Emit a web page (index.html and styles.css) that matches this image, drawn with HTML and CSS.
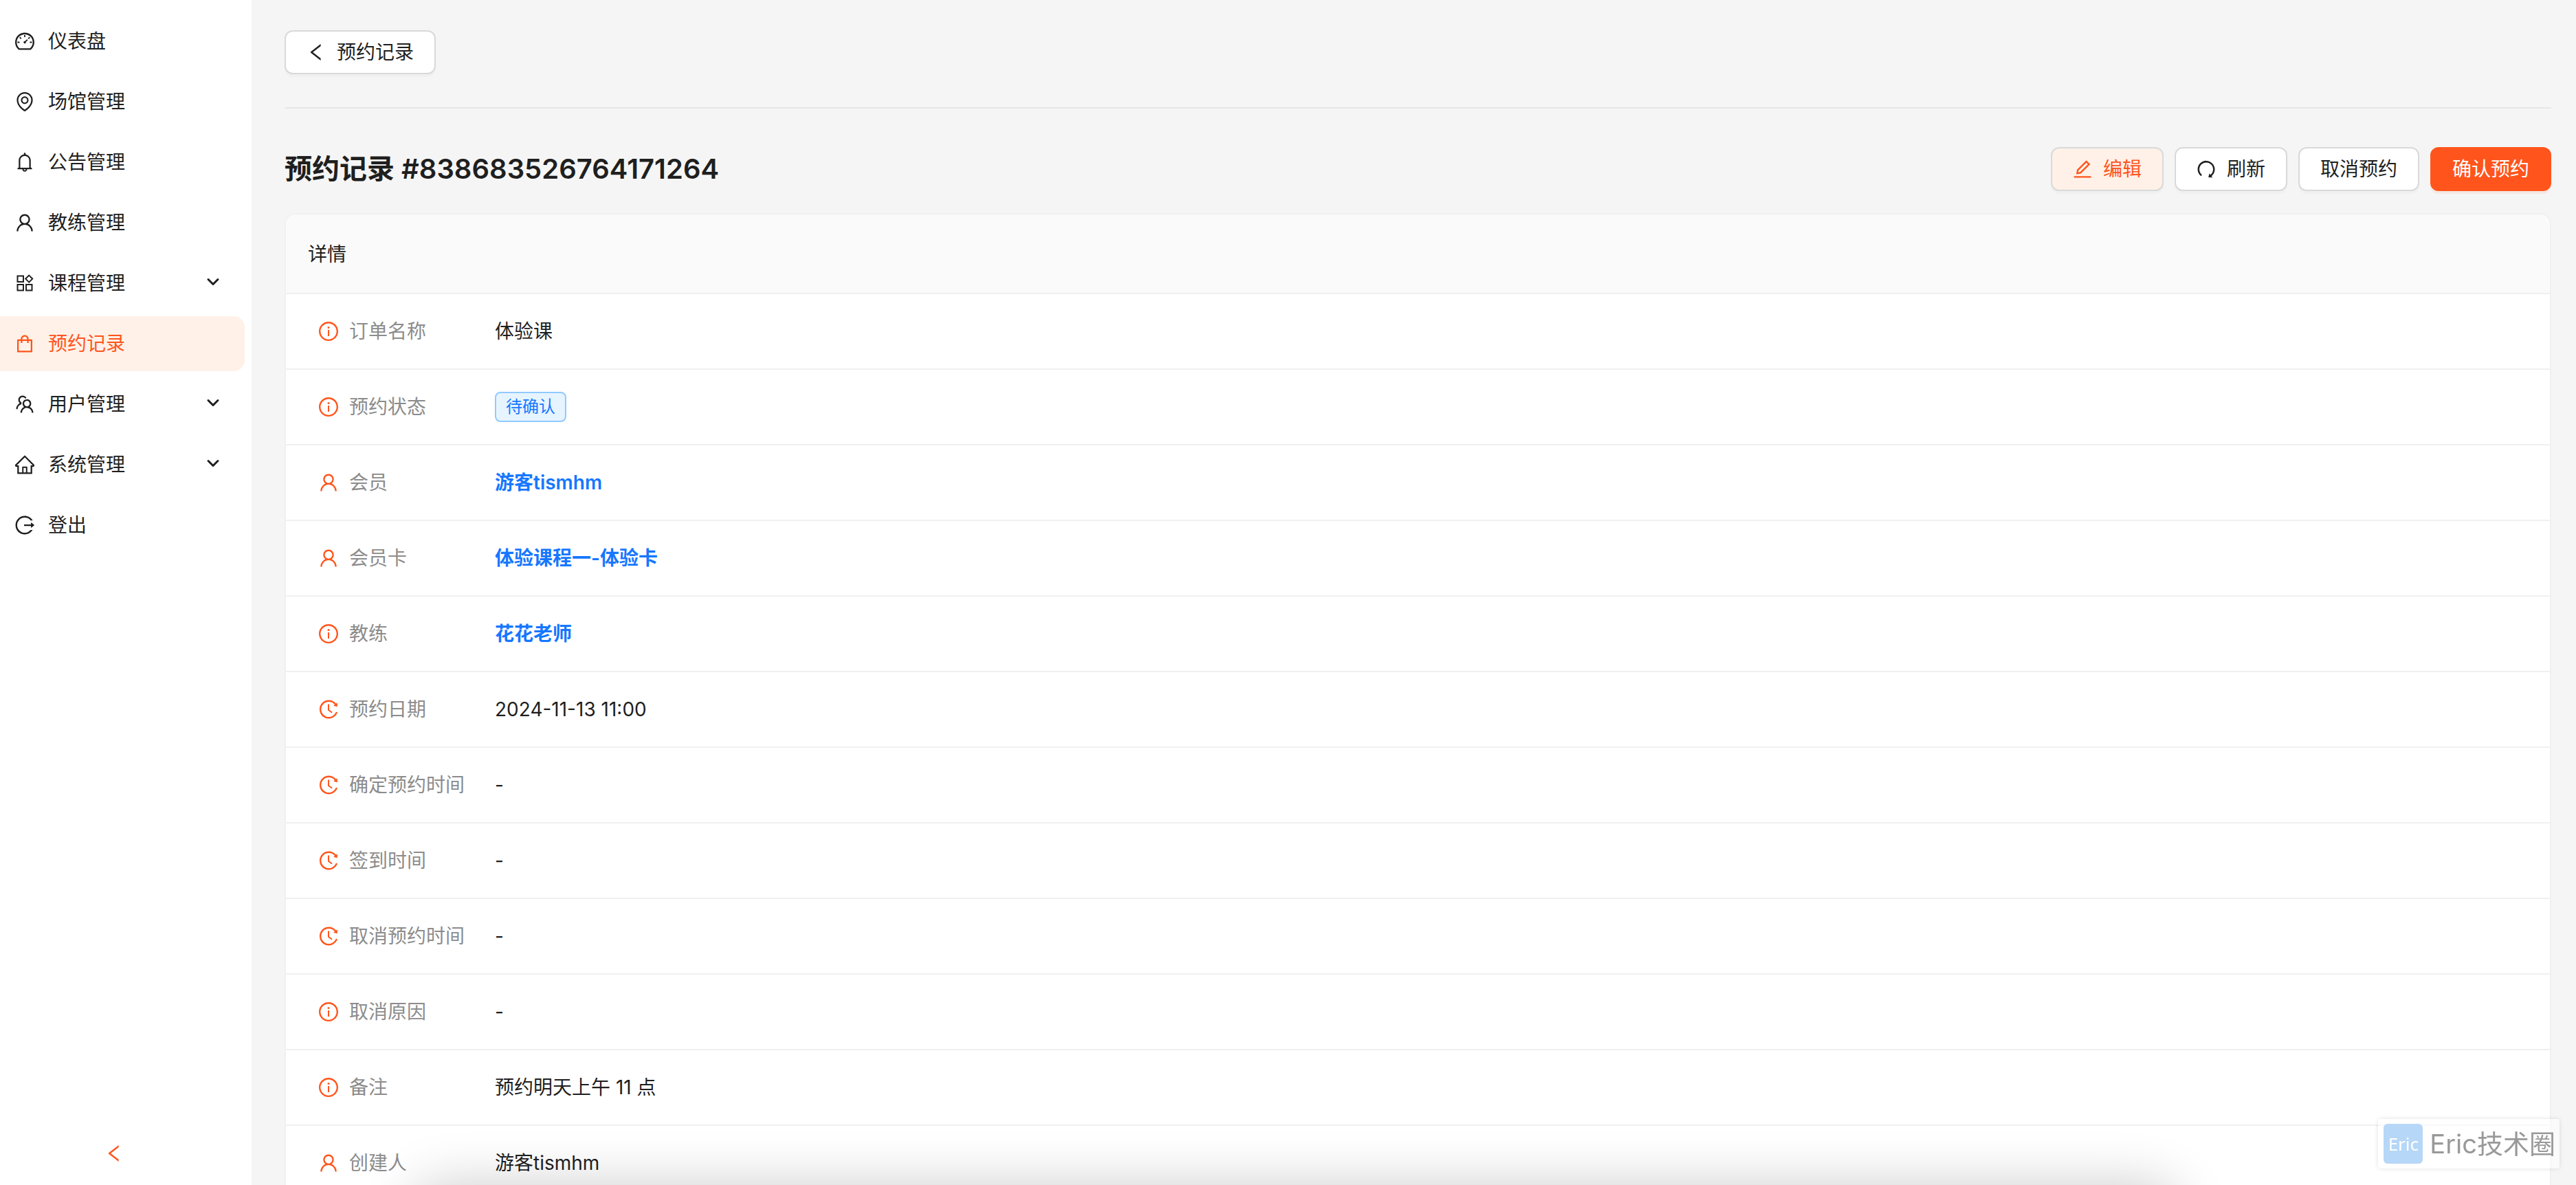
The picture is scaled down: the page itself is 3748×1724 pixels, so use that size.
FILE: index.html
```html
<!DOCTYPE html>
<html lang="zh-CN">
<head>
  <meta charset="UTF-8" />
  <meta name="viewport" content="width=device-width, initial-scale=1" />
  <title>预约记录</title>
  <link rel="stylesheet" href="styles.css">
</head>
<body>
  <!-- icon sprite -->
  <svg class="sprite" aria-hidden="true">
    <symbol id="i-dashboard" viewBox="64 64 896 896"><path d="M924.8 385.6a446.7 446.7 0 00-96-142.4 446.7 446.7 0 00-142.4-96C631.1 123.8 572.5 112 512 112s-119.1 11.8-174.4 35.2a446.7 446.7 0 00-142.4 96 446.7 446.7 0 00-96 142.4C75.8 440.9 64 499.5 64 560c0 132.7 58.3 257.7 159.9 343.1l1.7 1.4c5.8 4.8 13.1 7.5 20.6 7.5h531.7c7.5 0 14.8-2.7 20.6-7.5l1.7-1.4C901.7 817.7 960 692.7 960 560c0-60.5-11.9-119.1-35.2-174.4zM761.4 836H262.6A371.12 371.12 0 01140 560c0-99.4 38.7-192.8 109-263 70.3-70.3 163.7-109 263-109 99.4 0 192.8 38.7 263 109 70.3 70.3 109 163.7 109 263 0 105.6-44.5 205.5-122.6 276zM623.5 421.5a8.03 8.03 0 00-11.3 0L527.7 506c-18.7-5-39.4-.2-54.1 14.5a55.95 55.95 0 000 79.2 55.95 55.95 0 0079.2 0 55.87 55.87 0 0014.5-54.1l84.5-84.5c3.1-3.1 3.1-8.2 0-11.3l-28.3-28.3zM490 320h44c4.4 0 8-3.6 8-8v-80c0-4.4-3.6-8-8-8h-44c-4.4 0-8 3.6-8 8v80c0 4.4 3.6 8 8 8zm260 218v44c0 4.4 3.6 8 8 8h80c4.4 0 8-3.6 8-8v-44c0-4.4-3.6-8-8-8h-80c-4.4 0-8 3.6-8 8zm12.7-197.2l-31.1-31.1a8.03 8.03 0 00-11.3 0l-56.6 56.6a8.03 8.03 0 000 11.3l31.1 31.1c3.1 3.1 8.2 3.1 11.3 0l56.6-56.6c3.1-3.1 3.1-8.2 0-11.3zm-458.6-31.1a8.03 8.03 0 00-11.3 0l-31.1 31.1a8.03 8.03 0 000 11.3l56.6 56.6c3.1 3.1 8.2 3.1 11.3 0l31.1-31.1c3.1-3.1 3.1-8.2 0-11.3l-56.6-56.6zM262 530h-80c-4.4 0-8 3.6-8 8v44c0 4.4 3.6 8 8 8h80c4.4 0 8-3.6 8-8v-44c0-4.4-3.6-8-8-8z"/></symbol>
    <symbol id="i-pin" viewBox="64 64 896 896"><path d="M854.6 289.1a362.49 362.49 0 00-79.9-115.7 370.83 370.83 0 00-118.2-77.8C610.7 76.6 562.1 67 512 67c-50.1 0-98.7 9.6-144.5 28.5-44.3 18.3-84 44.5-118.2 77.8A363.6 363.6 0 00169.4 289c-19.5 45-29.4 92.8-29.4 142 0 70.6 16.9 140.9 50.1 208.7 26.7 54.5 64 107.6 111 158.1 80.3 86.2 164.5 138.9 188.4 153a43.9 43.9 0 0022.4 6.1c7.8 0 15.5-2 22.4-6.1 23.9-14.1 108.1-66.8 188.4-153 47-50.4 84.3-103.6 111-158.1C867.1 572 884 501.8 884 431.1c0-49.2-9.9-97-29.4-142zM512 880.2c-65.9-41.9-300-207.8-300-449.1 0-77.9 31.1-151.1 87.6-206.3C356.3 169.5 431.7 139 512 139s155.7 30.5 212.4 85.9C780.9 280 812 353.2 812 431.1c0 241.3-234.1 407.2-300 449.1zm0-617.2c-97.2 0-176 78.8-176 176s78.8 176 176 176 176-78.8 176-176-78.8-176-176-176zm79.2 255.2A111.6 111.6 0 01512 551c-29.9 0-58-11.7-79.2-32.8A111.6 111.6 0 01400 439c0-29.9 11.7-58 32.8-79.2A111.6 111.6 0 01512 327c29.9 0 58 11.6 79.2 32.8A111.6 111.6 0 01624 439c0 29.9-11.7 58-32.8 79.2z"/></symbol>
    <symbol id="i-bell" viewBox="64 64 896 896"><path d="M816 768h-24V428c0-141.1-104.3-257.8-240-277.2V112c0-22.1-17.9-40-40-40s-40 17.9-40 40v38.8C336.3 170.2 232 286.9 232 428v340h-24c-17.7 0-32 14.3-32 32v32c0 4.4 3.6 8 8 8h216c0 61.8 50.2 112 112 112s112-50.2 112-112h216c4.4 0 8-3.6 8-8v-32c0-17.7-14.3-32-32-32zM512 888c-26.5 0-48-21.5-48-48h96c0 26.5-21.5 48-48 48zM304 768V428c0-55.6 21.6-107.8 60.9-147.1S456.4 220 512 220c55.6 0 107.8 21.6 147.1 60.9S720 372.4 720 428v340H304z"/></symbol>
    <symbol id="i-user" viewBox="64 64 896 896"><path d="M858.5 763.6a374 374 0 00-80.6-119.5 375.63 375.63 0 00-119.5-80.6c-.4-.2-.8-.3-1.2-.5C719.5 518 760 444.7 760 362c0-137-111-248-248-248S264 225 264 362c0 82.7 40.5 156 102.8 201.1-.4.2-.8.3-1.2.5-44.8 18.9-85 46-119.5 80.6a375.63 375.63 0 00-80.6 119.5A371.7 371.7 0 00136 901.8a8 8 0 008 8.2h60c4.4 0 7.9-3.5 8-7.8 2-77.2 33-149.5 87.8-204.3 56.7-56.7 132-87.9 212.2-87.9s155.5 31.2 212.2 87.9C779 752.7 810 825 812 902.2c.1 4.4 3.6 7.8 8 7.8h60a8 8 0 008-8.2c-1-47.8-10.9-94.3-29.5-138.2zM512 534c-45.9 0-89.1-17.9-121.6-50.4S340 407.9 340 362c0-45.9 17.9-89.1 50.4-121.6S466.1 190 512 190s89.1 17.9 121.6 50.4S684 316.1 684 362c0 45.9-17.9 89.1-50.4 121.6S557.9 534 512 534z"/></symbol>
    <symbol id="i-apps" viewBox="0 0 28 28"><path fill="none" stroke="currentColor" stroke-width="2" d="M3.5 3.5h8.5v8.5H3.500zM3.500 16h8.500v8.500H3.500zM16 16h8.500v8.500H16zM20.200 2.600l5 5-5 5-5-5z"/></symbol>
    <symbol id="i-bag" viewBox="64 64 896 896"><path d="M832 312H696v-16c0-101.6-82.4-184-184-184s-184 82.4-184 184v16H192c-17.7 0-32 14.3-32 32v536c0 17.7 14.3 32 32 32h640c17.7 0 32-14.3 32-32V344c0-17.7-14.3-32-32-32zm-432-16c0-61.9 50.1-112 112-112s112 50.1 112 112v16H400v-16zm392 544H232V384h96v88c0 4.4 3.6 8 8 8h56c4.4 0 8-3.6 8-8v-88h224v88c0 4.4 3.6 8 8 8h56c4.4 0 8-3.6 8-8v-88h96v456z"/></symbol>
    <symbol id="i-team" viewBox="64 64 896 896"><path d="M824.2 699.9a301.55 301.55 0 00-86.4-60.4C783.1 602.8 812 546.8 812 484c0-110.8-92.4-201.7-203.2-200-109.1 1.7-197 90.6-197 200 0 62.8 29 118.8 74.2 155.5a300.95 300.95 0 00-86.4 60.4C345 754.6 314 826.8 312 903.8a8 8 0 008 8.2h56c4.3 0 7.9-3.4 8-7.7 1.9-58 25.4-112.3 66.7-153.5A226.62 226.62 0 01612 684c60.9 0 118.2 23.7 161.3 66.8C814.6 792 838 846.3 840 904.3c.1 4.3 3.7 7.7 8 7.7h56a8 8 0 008-8.2c-2-77-33-149.2-87.8-203.9zM612 612c-34.2 0-66.4-13.3-90.5-37.5a126.86 126.86 0 01-37.5-91.8c.3-32.8 13.4-64.5 36.3-88 24-24.6 56.1-38.3 90.4-38.7 33.9-.3 66.8 12.9 91 36.6 24.8 24.3 38.4 56.8 38.4 91.4 0 34.2-13.3 66.3-37.5 90.5A127.3 127.3 0 01612 612zM361.5 510.4c-.9-8.7-1.4-17.5-1.4-26.4 0-15.9 1.5-31.4 4.3-46.5.7-3.6-1.2-7.3-4.5-8.8-13.6-6.1-26.1-14.5-36.9-25.1a127.54 127.54 0 01-38.7-95.4c.9-32.1 13.8-62.6 36.3-85.6 24.7-25.3 57.9-39.1 93.2-38.7 31.9.3 62.7 12.6 86 34.4 7.9 7.4 14.7 15.6 20.4 24.4 2 3.1 5.9 4.4 9.3 3.2 17.6-6.1 36.2-10.4 55.3-12.4 5.6-.6 8.8-6.6 6.3-11.6-32.5-64.3-98.9-108.7-175.7-109.9-110.9-1.7-203.3 89.2-203.3 199.9 0 62.8 28.9 118.8 74.2 155.5-31.8 14.7-61.1 35-86.5 60.4-54.8 54.7-85.8 126.9-87.8 204a8 8 0 008 8.2h56.1c4.3 0 7.9-3.4 8-7.7 1.9-58 25.4-112.3 66.7-153.5 29.4-29.4 65.4-49.8 104.7-59.7 3.9-1 6.5-4.7 6-8.7z"/></symbol>
    <symbol id="i-home" viewBox="64 64 896 896"><path d="M946.5 505L560.1 118.8l-25.9-25.9a31.5 31.5 0 00-44.4 0L77.5 505a63.9 63.9 0 00-18.8 46c.4 35.2 29.7 63.3 64.9 63.3h42.5V940h691.8V614.3h43.4c17.1 0 33.2-6.7 45.3-18.8a63.6 63.6 0 0018.7-45.3c0-17-6.7-33.1-18.8-45.2zM568 868H456V664h112v204zm217.9-325.7V868H632V640c0-22.1-17.9-40-40-40H432c-22.1 0-40 17.9-40 40v228H238.1V542.3h-96l370-369.7 23.1 23.1L882 542.3h-96.1z"/></symbol>
    <symbol id="i-logout" viewBox="64 64 896 896"><path d="M868 732h-70.3c-4.8 0-9.3 2.1-12.3 5.8-7 8.5-14.5 16.7-22.4 24.5a353.84 353.84 0 01-112.7 75.9A352.8 352.8 0 01512.4 866c-47.9 0-94.3-9.4-137.9-27.8a353.84 353.84 0 01-112.7-75.9 353.28 353.28 0 01-76-112.5C167.3 606.2 158 559.9 158 512s9.4-94.2 27.8-137.8c17.8-42.1 43.4-80 76-112.5s70.5-58.1 112.7-75.9c43.6-18.4 90-27.8 137.9-27.8 47.9 0 94.3 9.3 137.9 27.8 42.2 17.8 80.1 43.4 112.7 75.9 7.9 7.9 15.3 16.1 22.4 24.5 3 3.7 7.6 5.8 12.3 5.8H868c6.3 0 10.2-7 6.7-12.3C798 160.5 663.8 81.6 511.3 82 271.7 82.6 79.6 277.1 82 516.4 84.4 751.9 276.2 942 512.4 942c152.1 0 285.7-78.8 362.3-197.7 3.4-5.3-.4-12.3-6.7-12.3zm88.9-226.3L815 393.7c-5.3-4.2-13-.4-13 6.3v76H488c-4.4 0-8 3.6-8 8v56c0 4.4 3.6 8 8 8h314v76c0 6.7 7.8 10.5 13 6.3l141.9-112a8 8 0 000-12.6z"/></symbol>
    <symbol id="i-left" viewBox="64 64 896 896"><path d="M724 218.3V141c0-6.7-7.7-10.4-12.9-6.3L260.3 486.8a31.86 31.86 0 000 50.3l450.8 352.1c5.3 4.1 12.9.4 12.9-6.3v-77.3c0-4.9-2.3-9.6-6.1-12.6l-360-281 360-281.1c3.8-3 6.1-7.7 6.1-12.6z"/></symbol>
    <symbol id="i-down" viewBox="0 0 20 20"><path fill="none" stroke="currentColor" stroke-width="3" stroke-linecap="round" stroke-linejoin="round" d="M3 4.5l7 7 7-7"/></symbol>
    <symbol id="i-edit" viewBox="64 64 896 896"><path d="M257.7 752c2 0 4-.2 6-.5L431.9 722c2-.4 3.9-1.3 5.3-2.8l423.9-423.9a9.96 9.96 0 000-14.1L694.9 114.9c-1.9-1.9-4.4-2.9-7.1-2.9s-5.2 1-7.1 2.9L256.8 538.8c-1.5 1.5-2.4 3.3-2.8 5.3l-29.5 168.2a33.5 33.5 0 009.4 29.8c6.6 6.4 14.9 9.9 23.8 9.9zm67.4-174.4L687.8 215l73.3 73.3-362.7 362.6-88.9 15.7 15.6-89zM880 836H144c-17.7 0-32 14.3-32 32v36c0 4.4 3.6 8 8 8h784c4.4 0 8-3.6 8-8v-36c0-17.7-14.3-32-32-32z"/></symbol>
    <symbol id="i-redo" viewBox="64 64 896 896"><path transform="translate(1024 0) scale(-1 1)" d="M511.4 124C290.5 124.3 112 303 112 523.9c0 128 60.2 242 153.8 315.2l-37.5 48c-4.1 5.3-.3 13 6.3 12.9l167-.8c5.2 0 9-4.9 7.7-9.9L369.8 727a8 8 0 00-14.1-3L315 776.1c-10.2-8-20-16.7-29.3-26a318.64 318.64 0 01-68.6-101.7C200.4 609 192 567.1 192 523.9s8.4-85.1 25.1-124.5c16.1-38.1 39.2-72.3 68.6-101.7 29.4-29.4 63.6-52.5 101.7-68.6C426.9 212.4 468.8 204 512 204s85.1 8.4 124.5 25.1c38.1 16.1 72.3 39.2 101.7 68.6 29.4 29.4 52.5 63.6 68.6 101.7 16.7 39.4 25.1 81.3 25.1 124.5s-8.4 85.1-25.1 124.5a318.64 318.64 0 01-68.6 101.7c-7.5 7.5-15.3 14.5-23.4 21.2a7.93 7.93 0 00-1.2 11.1l39.4 50.5c2.8 3.5 7.9 4.1 11.4 1.3C854.5 760.8 912 649.1 912 523.9c0-221.1-179.4-400.2-400.6-399.9z"/></symbol>
    <symbol id="i-info" viewBox="64 64 896 896"><path d="M512 64C264.6 64 64 264.6 64 512s200.6 448 448 448 448-200.6 448-448S759.4 64 512 64zm0 820c-205.4 0-372-166.6-372-372s166.6-372 372-372 372 166.6 372 372-166.6 372-372 372zM464 336a48 48 0 1096 0 48 48 0 10-96 0zm72 112h-48c-4.4 0-8 3.6-8 8v272c0 4.4 3.6 8 8 8h48c4.4 0 8-3.6 8-8V456c0-4.4-3.6-8-8-8z"/></symbol>
    <symbol id="i-time" viewBox="64 64 896 896"><path d="M536.1 273H488c-4.4 0-8 3.6-8 8v275.3c0 2.6 1.2 5 3.3 6.5l165.3 120.7c3.6 2.6 8.6 1.9 11.2-1.7l28.6-39c2.7-3.7 1.9-8.7-1.7-11.2L544.1 528.5V281c0-4.4-3.6-8-8-8zm219.8 75.2l156.8 38.3c5 1.2 9.9-2.6 9.9-7.7l.8-161.5c0-6.7-7.7-10.5-12.9-6.3L752.9 334.1a8 8 0 003 14.1zm167.7 301.1l-56.7-19.5a8 8 0 00-10.1 4.8c-1.9 5.1-3.9 10.1-6 15.1-17.8 42.1-43.3 80-75.9 112.5a353 353 0 01-112.5 75.9 352.18 352.18 0 01-137.7 27.8c-47.8 0-94.1-9.3-137.7-27.8a353 353 0 01-112.5-75.9c-32.5-32.5-58-70.4-75.9-112.5A353.44 353.44 0 01171 512c0-47.8 9.3-94.2 27.8-137.8 17.8-42.1 43.3-80 75.9-112.5a353 353 0 01112.5-75.9C430.6 167.3 477 158 524.8 158s94.1 9.3 137.7 27.8A353 353 0 01775 261.7c10.2 10.3 19.8 21 28.6 32.3l59.8-46.8C784.7 146.6 662.2 81.9 524.6 82 285 82.1 92.6 276.7 95 516.4 97.4 751.9 288.9 942 524.8 942c185.5 0 343.5-117.6 403.7-282.3 1.5-4.2-.7-8.9-4.9-10.4z"/></symbol>
  </svg>

  <div class="layout">
    <aside class="sidebar">
      <nav class="menu">
        <a class="menu-item" href="#"><svg class="icon"><use href="#i-dashboard"/></svg><span>仪表盘</span></a>
        <a class="menu-item" href="#"><svg class="icon"><use href="#i-pin"/></svg><span>场馆管理</span></a>
        <a class="menu-item" href="#"><svg class="icon"><use href="#i-bell"/></svg><span>公告管理</span></a>
        <a class="menu-item" href="#"><svg class="icon"><use href="#i-user"/></svg><span>教练管理</span></a>
        <button class="menu-item" type="button"><svg class="icon"><use href="#i-apps"/></svg><span>课程管理</span><svg class="arrow"><use href="#i-down"/></svg></button>
        <a class="menu-item active" href="#"><svg class="icon"><use href="#i-bag"/></svg><span>预约记录</span></a>
        <button class="menu-item" type="button"><svg class="icon"><use href="#i-team"/></svg><span>用户管理</span><svg class="arrow"><use href="#i-down"/></svg></button>
        <button class="menu-item" type="button"><svg class="icon"><use href="#i-home"/></svg><span>系统管理</span><svg class="arrow"><use href="#i-down"/></svg></button>
        <a class="menu-item" href="#"><svg class="icon"><use href="#i-logout"/></svg><span>登出</span></a>
      </nav>
      <button class="collapse" type="button" aria-label="收起菜单"><svg class="icon"><use href="#i-left"/></svg></button>
    </aside>

    <main class="content">
      <div class="topbar">
        <button class="btn" type="button"><svg class="icon"><use href="#i-left"/></svg>预约记录</button>
      </div>

      <header class="page-header">
        <h1>预约记录 #838683526764171264</h1>
        <div class="actions">
          <button class="btn btn-edit" type="button"><svg class="icon"><use href="#i-edit"/></svg>编辑</button>
          <button class="btn" type="button"><svg class="icon"><use href="#i-redo"/></svg>刷新</button>
          <button class="btn" type="button">取消预约</button>
          <button class="btn btn-primary" type="button">确认预约</button>
        </div>
      </header>

      <section class="card">
        <h2 class="card-title">详情</h2>
        <table class="details">
          <tr><th scope="row"><div class="label"><svg class="icon"><use href="#i-info"/></svg>订单名称</div></th><td>体验课</td></tr>
          <tr><th scope="row"><div class="label"><svg class="icon"><use href="#i-info"/></svg>预约状态</div></th><td><span class="tag">待确认</span></td></tr>
          <tr><th scope="row"><div class="label"><svg class="icon"><use href="#i-user"/></svg>会员</div></th><td><a href="#">游客tismhm</a></td></tr>
          <tr><th scope="row"><div class="label"><svg class="icon"><use href="#i-user"/></svg>会员卡</div></th><td><a href="#">体验课程一-体验卡</a></td></tr>
          <tr><th scope="row"><div class="label"><svg class="icon"><use href="#i-info"/></svg>教练</div></th><td><a href="#">花花老师</a></td></tr>
          <tr><th scope="row"><div class="label"><svg class="icon"><use href="#i-time"/></svg>预约日期</div></th><td>2024-11-13 11:00</td></tr>
          <tr><th scope="row"><div class="label"><svg class="icon"><use href="#i-time"/></svg>确定预约时间</div></th><td>-</td></tr>
          <tr><th scope="row"><div class="label"><svg class="icon"><use href="#i-time"/></svg>签到时间</div></th><td>-</td></tr>
          <tr><th scope="row"><div class="label"><svg class="icon"><use href="#i-time"/></svg>取消预约时间</div></th><td>-</td></tr>
          <tr><th scope="row"><div class="label"><svg class="icon"><use href="#i-info"/></svg>取消原因</div></th><td>-</td></tr>
          <tr><th scope="row"><div class="label"><svg class="icon"><use href="#i-info"/></svg>备注</div></th><td>预约明天上午 11 点</td></tr>
          <tr><th scope="row"><div class="label"><svg class="icon"><use href="#i-user"/></svg>创建人</div></th><td>游客tismhm</td></tr>
        </table>
      </section>
    </main>
  </div>

  <div class="bottom-shadow"></div>
  <div class="watermark"><span class="watermark-logo">Eric</span><span>Eric技术圈</span></div>
</body>
</html>
```
FILE: styles.css
```css
* {
  box-sizing: border-box;
}
body {
  margin: 0;
  font-family: Inter, "Noto Sans CJK SC", sans-serif;
  font-size: 28px;
  line-height: 44px;
  color: #1f1f1f;
  background: #f5f5f5;
  overflow: hidden;
}
button {
  font: inherit;
  color: inherit;
  cursor: pointer;
}
a {
  text-decoration: none;
}
.sprite {
  display: none;
}
.icon {
  width: 28px;
  height: 28px;
  flex: none;
  fill: currentColor;
}
.layout {
  display: flex;
  height: 100vh;
}

/* sidebar */
.sidebar {
  display: flex;
  flex-direction: column;
  justify-content: space-between;
  flex: none;
  width: 366px;
  padding: 20px 10px 24px 0;
  background: #fff;
}
.menu {
  display: flex;
  flex-direction: column;
  gap: 8px;
}
.menu-item {
  display: flex;
  align-items: center;
  gap: 20px;
  height: 80px;
  padding: 0 36px 0 22px;
  border: none;
  border-radius: 0 16px 16px 0;
  background: none;
  color: #1f1f1f;
}
.menu-item.active {
  background: #fff1e8;
  color: #ff551c;
}
.arrow {
  width: 20px;
  height: 20px;
  margin-left: auto;
}
.collapse {
  display: flex;
  justify-content: center;
  padding: 8px 24px 8px 0;
  border: none;
  background: none;
  color: #ff551c;
}

/* content */
.content {
  flex: 1;
  min-width: 0;
  padding: 44px 36px 44px 48px;
  overflow-y: auto;
  scrollbar-width: none;
}
.topbar {
  padding-bottom: 48px;
  border-bottom: 2px solid #e7e7e7;
}
.btn {
  display: inline-flex;
  align-items: center;
  gap: 16px;
  height: 64px;
  padding: 0 30px;
  border: 2px solid #d9d9d9;
  border-radius: 12px;
  background: #fff;
  box-shadow: 0 4px 0 rgba(0, 0, 0, 0.02);
  vertical-align: top;
}
.btn-edit {
  background: #fff1e8;
  color: #ff551c;
}
.btn-primary {
  border-color: #ff551c;
  background: #ff551c;
  color: #fff;
  box-shadow: 0 4px 0 rgba(255, 85, 28, 0.08);
}
.page-header {
  display: flex;
  align-items: center;
  justify-content: space-between;
  padding: 56px 0 32px;
}
.page-header h1 {
  margin: 0;
  font-size: 40px;
  line-height: 64px;
  font-weight: 600;
}
.actions {
  display: flex;
  gap: 16px;
}
.card {
  border: 2px solid #f0f0f0;
  border-radius: 16px;
  background: #fff;
  overflow: hidden;
}
.card-title {
  margin: 0;
  padding: 36px 32px 34px;
  border-bottom: 2px solid #f0f0f0;
  background: #fafafa;
  font-size: 28px;
  font-weight: 400;
}
.details {
  width: 100%;
  border-collapse: separate;
  border-spacing: 0;
}
.details th,
.details td {
  height: 110px;
  padding: 0;
  border-bottom: 2px solid #f0f0f0;
  text-align: left;
}
.details th {
  width: 304px;
  padding-left: 48px;
  font-weight: 400;
  color: #8c8c8c;
}
.label {
  display: flex;
  align-items: center;
  gap: 16px;
}
.label .icon {
  color: #ff551c;
}
.details a {
  color: #1677ff;
  font-weight: 600;
}
.tag {
  display: block;
  width: fit-content;
  padding: 0 14px;
  border: 2px solid #91caff;
  border-radius: 8px;
  background: #e6f4ff;
  color: #1677ff;
  font-size: 24px;
  line-height: 40px;
}

/* overlays */
.bottom-shadow {
  position: fixed;
  top: 100%;
  left: 600px;
  right: 580px;
  height: 120px;
  border-radius: 40px;
  box-shadow: 0 0 80px rgba(0, 0, 0, 0.2);
  pointer-events: none;
}
.watermark {
  position: fixed;
  right: 24px;
  bottom: 24px;
  display: flex;
  align-items: center;
  gap: 10px;
  height: 72px;
  padding: 0 6px 0 8px;
  border-radius: 4px;
  background: rgba(255, 255, 255, 0.5);
  box-shadow: 0 0 6px rgba(0, 0, 0, 0.12);
  color: #999;
  font-size: 38px;
}
.watermark-logo {
  width: 57px;
  border-radius: 6px;
  background: #b6d7f7;
  color: #fff;
  font-family: "Noto Sans", sans-serif;
  font-size: 26px;
  line-height: 58px;
  text-align: center;
}
```
